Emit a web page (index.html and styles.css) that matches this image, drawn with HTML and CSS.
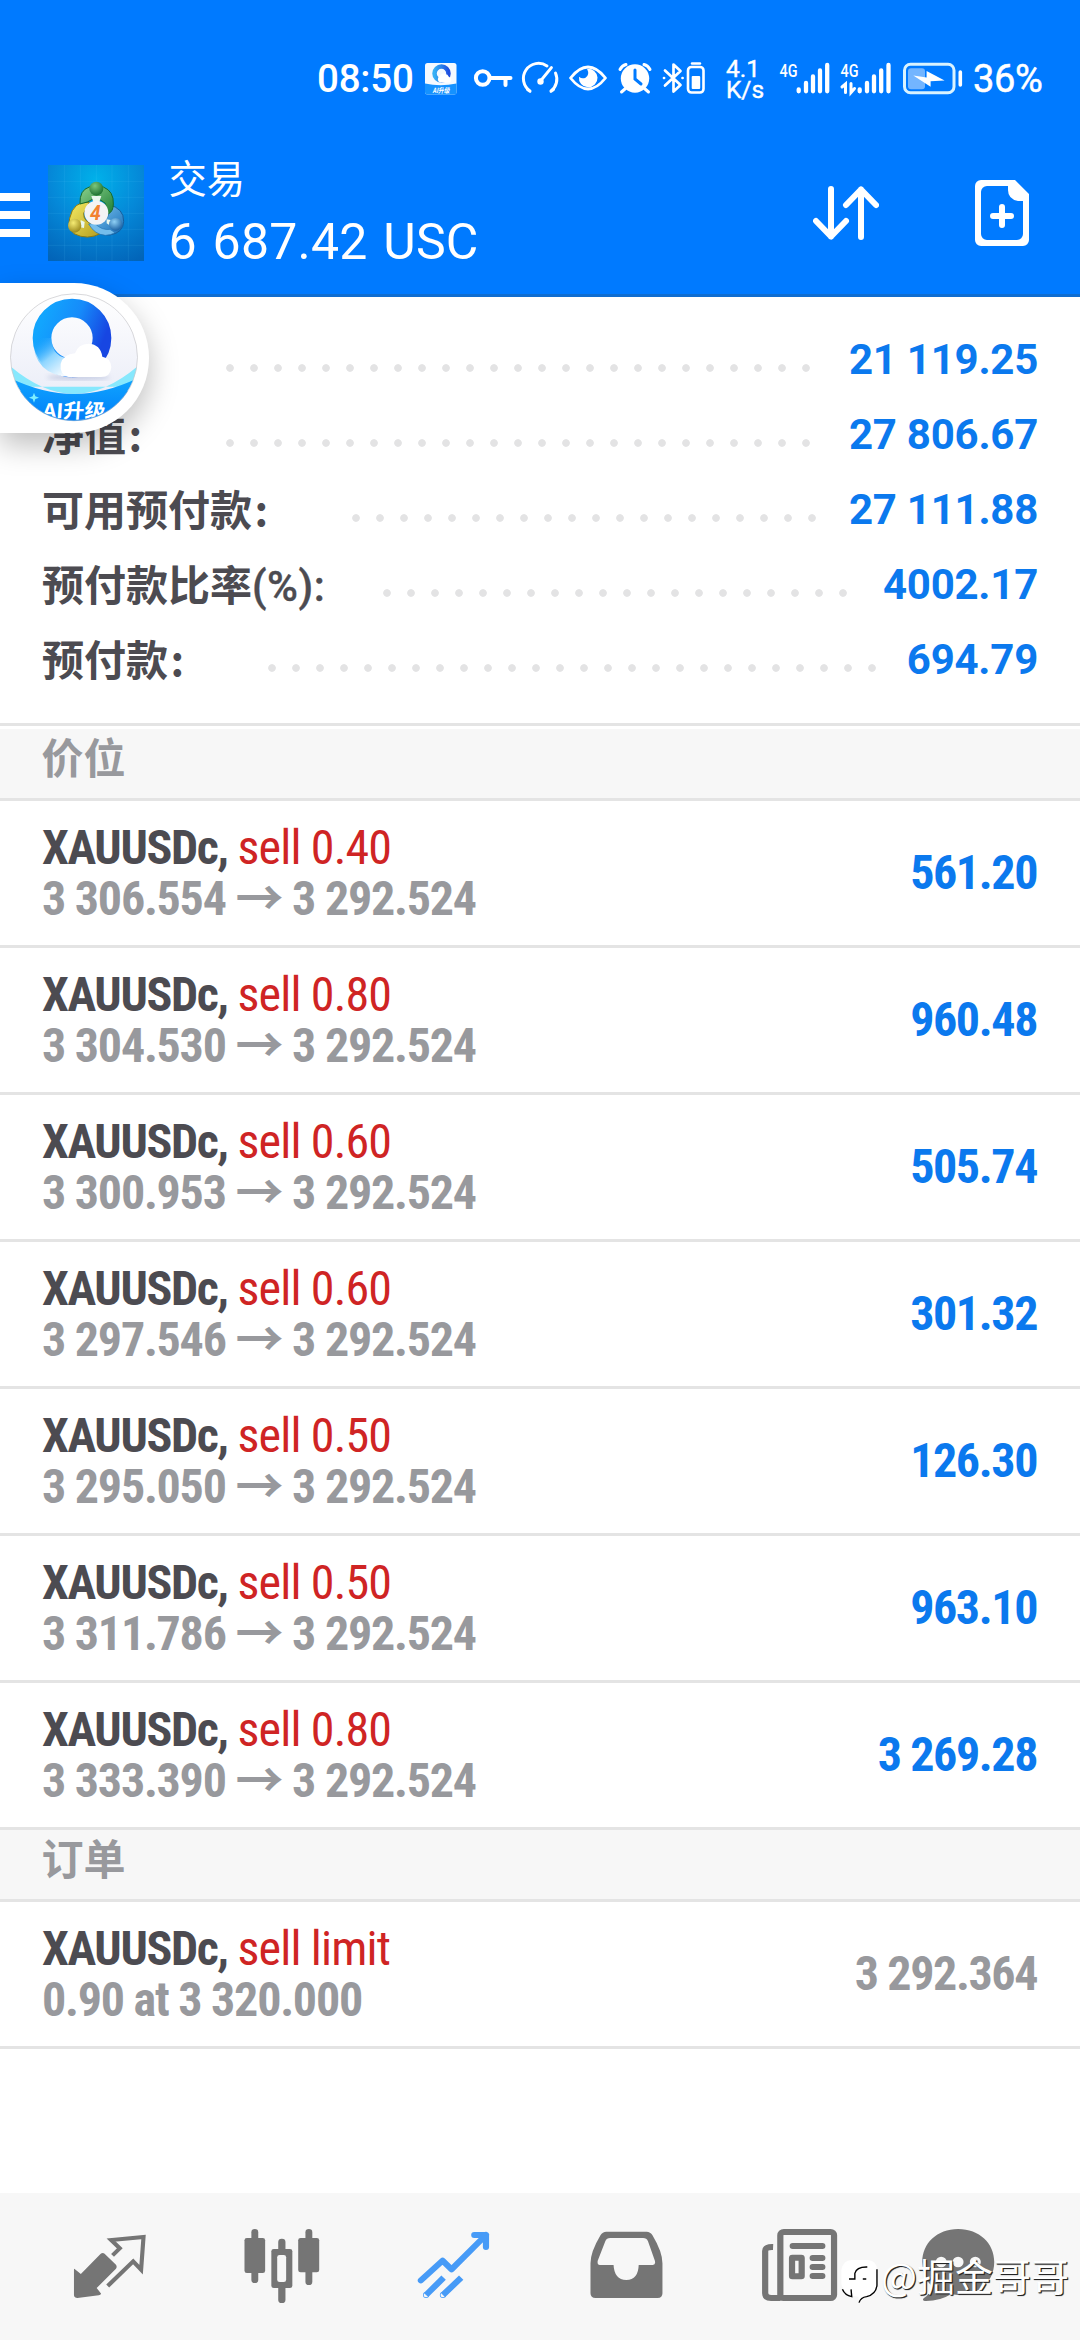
FILE: index.html
```html
<!DOCTYPE html>
<html lang="zh-CN">
<head>
<meta charset="utf-8">
<title>交易</title>
<link rel="stylesheet" href="styles.css">
</head>
<body>
<div class="app">
  <header class="top">
    <div class="status">
      <span class="clock">08:50</span>
      <svg class="status-icons" width="300" height="40" viewBox="420 58 300 40" fill="none" stroke="#fff" stroke-width="3.4" stroke-linecap="round">
        <defs>
          <linearGradient id="mini" x1="0" y1="0" x2="1" y2="0"><stop offset="0" stop-color="#35b0f5"/><stop offset="1" stop-color="#1f4fe0"/></linearGradient>
        </defs>
        <g stroke="none">
          <rect x="425" y="63" width="31.5" height="31.5" rx="2.5" fill="#f4f9ff"/>
          <path d="M425 83.500Q440.500 87 456.500 83.500V92q0 2.500-2.500 2.500H427.500q-2.500 0-2.500-2.500z" fill="#1592ff"/>
          <circle cx="441.500" cy="73.500" r="7" stroke="url(#mini)" stroke-width="4.500"/>
          <path d="M440 82.500a3.500 3.500 0 0 1 0-6.500 5 5 0 0 1 9 1 3 3 0 0 1 1 5.500z" fill="#fff"/>
          <text class="mini-label" x="432.500" y="93" textLength="17" lengthAdjust="spacingAndGlyphs">AI升级</text>
        </g>
        <g stroke-width="4"><circle cx="482.700" cy="78" r="6.800"/><path d="M491 78h19.500M505.500 79v6" /></g>
        <path d="M530 91a15 15 0 0 1 17-25M555.500 73a15 15 0 0 1-4.500 18M527.500 89.500l2.500 1.800M553.500 89.500l-2.500 1.800" stroke-width="3"/>
        <path d="M540.500 81l11-13.500" stroke-width="2.800"/><circle cx="540.500" cy="81.500" r="3.200" fill="#fff" stroke="none"/>
        <path d="M570.500 78q17.500-22 35 0q-17.500 22-35 0z" stroke-width="2.800" stroke-linejoin="round"/>
        <path d="M587 68.800a9.300 9.300 0 1 1-8 8q3 2.500 6.500 1 4.500-3 1.500-9z" fill="#fff" stroke="none"/>
        <circle cx="635" cy="78.500" r="14.200" fill="#fff" stroke="none"/>
        <path d="M620 69.500q2-4 6-5M650 69.500q-2-4-6-5M625.500 88.500l-4 3.500M644.500 88.500l4 3.500" stroke-width="3"/>
        <path d="M635 70v9l6 5" stroke="#007aff" stroke-width="3"/>
        <path d="M665 70.500l15.500 14.500-7 6.500v-27l7 6.500-15.500 14.500M664 78h.1M682.500 78h.1" stroke-width="2.700" stroke-linejoin="round"/>
        <rect x="688" y="67" width="15.500" height="25.500" rx="3.500" stroke-width="2.600"/>
        <path d="M692 63.500h8" stroke-width="2.400"/><rect x="691.700" y="76" width="8.500" height="13" rx="1" fill="#fff" stroke="none"/>
      </svg>
      <span class="speed">4.1<br>K/s</span>
      <svg class="signal" width="195" height="40" viewBox="775 58 195 40" fill="none" stroke="#fff" stroke-linecap="round">
        <text class="net" x="779.500" y="76.500" textLength="18" lengthAdjust="spacingAndGlyphs">4G</text>
        <text class="net" x="840.500" y="76.500" textLength="18" lengthAdjust="spacingAndGlyphs">4G</text>
        <path d="M798.700 89.500v1.800M806 83v8.300M813 76.500v14.800M820 70.500v20.800M827.200 65v26.300M859.700 89.500v1.800M867 83v8.300M874 76.500v14.800M881.200 70.500v20.800M888.500 65v26.300" stroke-width="4.300"/>
        <path d="M842 87l3.500-3v8.500M851 83.500v9l3.500-4" stroke-width="3"/>
        <rect x="904.500" y="64.200" width="49.500" height="28.600" rx="6" stroke="#d9f3ff" stroke-width="3"/>
        <rect x="908" y="68.300" width="17" height="21" rx="3" fill="#73b5ff" stroke="none"/>
        <path d="M913.300 75.500l13.300 2v-6.500l18 9.500-14 .7v5.500z" fill="#fff" stroke="none"/>
        <path d="M960.300 72v13" stroke-width="3.600"/>
      </svg>
      <span class="percent">36%</span>
    </div>
    <div class="bar">
      <div class="menu"><i></i><i></i><i></i></div>
      <svg class="logo" width="96" height="96" viewBox="144 75 288 288">
        <defs>
          <radialGradient id="bg" cx=".5" cy=".15" r=".95"><stop offset="0" stop-color="#00b1ea"/><stop offset=".5" stop-color="#0588d8"/><stop offset="1" stop-color="#0264b8"/></radialGradient>
          <linearGradient id="gr" x1="0" y1="0" x2="1" y2="1"><stop offset="0" stop-color="#8bd08c"/><stop offset="1" stop-color="#1d7f35"/></linearGradient>
          <radialGradient id="grh" cx=".4" cy=".3" r=".8"><stop offset="0" stop-color="#7cc67c"/><stop offset="1" stop-color="#0f6526"/></radialGradient>
          <linearGradient id="ye" x1="0" y1="0" x2="1" y2="1"><stop offset="0" stop-color="#f5ec65"/><stop offset="1" stop-color="#b59c1c"/></linearGradient>
          <radialGradient id="yeh" cx=".4" cy=".3" r=".8"><stop offset="0" stop-color="#f6ec74"/><stop offset="1" stop-color="#8f7c10"/></radialGradient>
          <linearGradient id="bl" x1="0" y1="0" x2="1" y2="1"><stop offset="0" stop-color="#86cdf5"/><stop offset="1" stop-color="#146bb6"/></linearGradient>
          <radialGradient id="blh" cx=".4" cy=".3" r=".8"><stop offset="0" stop-color="#8fd0f5"/><stop offset="1" stop-color="#0e5499"/></radialGradient>
        </defs>
        <rect x="144" y="75" width="288" height="288" fill="url(#bg)"/>
        <path d="M194 75v288M242 75v288M289 75v288M336 75v288M385 75v288M144 125h288M144 172h288M144 220h288M144 268h288M144 316h288" stroke="#6cd0ff" stroke-opacity=".22" stroke-width="1.500"/>
        <path d="M326 194Q372 205 371 244Q370 278 330 285Q292 288 266 252L300 244Q332 244 326 194z" fill="url(#bl)" stroke="#145e9e" stroke-width="3"/>
        <path d="M268 187Q220 182 209 235Q202 262 222 281Q262 302 303 280L280 252Q250 246 251 220z" fill="url(#ye)" stroke="#8c7a12" stroke-width="3"/>
        <path d="M240 192Q238 150 268 141H310Q342 154 340 192Q340 214 325 222L316 190Q290 166 262 186z" fill="url(#gr)" stroke="#176a2c" stroke-width="3"/>
        <path d="M266 252L284 250Q306 272 330 268L345 278Q334 285 316 286Q284 284 266 252z" fill="#74bdec" stroke="#2272b4" stroke-width="2"/>
        <path d="M274 168h30l-6 18h-18zM242 240l12 6-2 18-10-2zM320 238l12 2 0 18-12-8z" fill="#e9f7ed"/>
        <circle cx="289" cy="146" r="21" fill="url(#grh)"/><ellipse cx="224" cy="257" rx="20" ry="21" fill="url(#yeh)"/><ellipse cx="347" cy="253" rx="20" ry="19" fill="url(#blh)"/>
        <circle cx="289" cy="218" r="36" fill="#f3f3f5"/>
        <text class="four" x="270" y="240">4</text>
      </svg>
      <div class="account"><div class="title">交易</div><div class="amount">6 687.42 USC</div></div>
      <svg class="sort" width="66" height="54" viewBox="813 186 66 54" fill="none" stroke="#fff" stroke-width="6" stroke-linecap="round" stroke-linejoin="round"><path d="M831 189v47.500M816 221l15 15.500 15-15.500M861 237v-47.500M846 205l15-15.500 15 15.500"/></svg>
      <svg class="new" width="54" height="66" viewBox="975 180 54 66"><path fill="#fff" fill-rule="evenodd" d="M981 180h34l14 14v46a6 6 0 0 1-6 6h-42a6 6 0 0 1-6-6v-54a6 6 0 0 1 6-6zM987 186a6 6 0 0 0-6 6v42a6 6 0 0 0 6 6h30a6 6 0 0 0 6-6v-33h-5q-10-2-10-11v-4z"/><path d="M993 216h18M1002 207v18" stroke="#fff" stroke-width="6" stroke-linecap="round"/></svg>
    </div>
  </header>

  <section class="summary">
    <div class="sum"><span class="label"></span><i class="dots" style="width:600px"></i><b style="width:220px">21 119.25</b></div>
    <div class="sum"><span class="label">净值<span class="colon">:</span></span><i class="dots" style="width:600px"></i><b style="width:220px">27 806.67</b></div>
    <div class="sum"><span class="label">可用预付款<span class="colon">:</span></span><i class="dots" style="width:480px"></i><b style="width:214px">27 111.88</b></div>
    <div class="sum"><span class="label">预付款比率<span class="latin">(%):</span></span><i class="dots" style="width:480px"></i><b style="width:183px">4002.17</b></div>
    <div class="sum"><span class="label">预付款<span class="colon">:</span></span><i class="dots" style="width:624px"></i><b style="width:154px">694.79</b></div>
  </section>

  <h2 class="section first">价位</h2>
  <div class="row"><div><p><b>XAUUSDc,</b> <em>sell 0.40</em></p><p class="sub">3 306.554 <span class="arrow">→</span> 3 292.524</p></div><span class="profit">561.20</span></div>
  <div class="row"><div><p><b>XAUUSDc,</b> <em>sell 0.80</em></p><p class="sub">3 304.530 <span class="arrow">→</span> 3 292.524</p></div><span class="profit">960.48</span></div>
  <div class="row"><div><p><b>XAUUSDc,</b> <em>sell 0.60</em></p><p class="sub">3 300.953 <span class="arrow">→</span> 3 292.524</p></div><span class="profit">505.74</span></div>
  <div class="row"><div><p><b>XAUUSDc,</b> <em>sell 0.60</em></p><p class="sub">3 297.546 <span class="arrow">→</span> 3 292.524</p></div><span class="profit">301.32</span></div>
  <div class="row"><div><p><b>XAUUSDc,</b> <em>sell 0.50</em></p><p class="sub">3 295.050 <span class="arrow">→</span> 3 292.524</p></div><span class="profit">126.30</span></div>
  <div class="row"><div><p><b>XAUUSDc,</b> <em>sell 0.50</em></p><p class="sub">3 311.786 <span class="arrow">→</span> 3 292.524</p></div><span class="profit">963.10</span></div>
  <div class="row"><div><p><b>XAUUSDc,</b> <em>sell 0.80</em></p><p class="sub">3 333.390 <span class="arrow">→</span> 3 292.524</p></div><span class="profit">3 269.28</span></div>
  <h2 class="section">订单</h2>
  <div class="row"><div><p><b>XAUUSDc,</b> <em>sell limit</em></p><p class="sub">0.90 at 3 320.000</p></div><span class="profit pending">3 292.364</span></div>

  <nav class="tabs">
    <svg viewBox="68 39 506 441" preserveAspectRatio="none" fill="#757575">
      <path d="M217 266L236 282L293 222Q299 216 305 221L338 254Q342 260 338 266L282 324L295 341Q293 345 288 346L226 354Q217 354 216 346V268z"/>
      <path d="M328 226L349 205L324 180L418 171L411 269L388 244L314 318" fill="none" stroke="#757575" stroke-width="12"/>
    </svg>
    <svg viewBox="574 39 506 441" preserveAspectRatio="none" fill="#757575">
      <rect x="729" y="147" width="20" height="162" rx="10"/><rect x="709" y="174" width="60" height="105" rx="7"/>
      <rect x="886" y="147" width="20" height="168" rx="10"/><rect x="865" y="174" width="61" height="103" rx="7"/>
      <rect x="807" y="176" width="21" height="193" rx="10"/><rect x="787" y="207" width="61" height="117" rx="7"/><rect x="804" y="225" width="26" height="81" rx="7" fill="#f7f7f7"/>
    </svg>
    <svg viewBox="1080 39 506 441" preserveAspectRatio="none" fill="none" stroke="#479bf7" stroke-width="18">
      <path d="M1222 301L1285 242L1311 268L1411 165M1377 165H1411V201" stroke-linecap="round" stroke-linejoin="round"/>
      <path d="M1288 293L1237 345M1339 293L1286 345"/><circle cx="1237" cy="345" r="1" stroke-width="16"/><circle cx="1286" cy="345" r="1" stroke-width="16"/>
    </svg>
    <svg viewBox="17.8 39 506 441" preserveAspectRatio="none">
      <path fill="#757575" fill-rule="evenodd" d="M193 155H310Q321 155 327 166Q356 216 356 250V340Q356 354 342 354H162Q147 354 147 340V250Q147 216 176 166Q182 155 193 155zM204 174Q194 174 190 184L168 242Q166 255 174 255H214Q216 299 251 300Q286 299 287 255H328Q337 255 334 242L314 184Q310 174 300 174z"/>
    </svg>
    <svg viewBox="523.8 39 506 441" preserveAspectRatio="none" fill="none" stroke="#757575" stroke-width="18">
      <rect x="699" y="156" width="156" height="198" rx="10"/><path d="M678 201Q655 200 655 213V340Q655 354 672 354H700"/>
      <path d="M735 198H821M793 234H821M793 261H821M793 288H821" stroke-linecap="round"/><rect x="733" y="233" width="28" height="56" rx="1"/>
    </svg>
    <svg viewBox="1029.800 39 506 441" preserveAspectRatio="none">
      <path fill="#757575" d="M1213 147C1275 147 1318 190 1318 246C1318 304 1275 345 1213 345L1192 343Q1160 364 1116 363Q1108 361 1113 355Q1134 342 1134 316Q1110 290 1109 246C1109 190 1152 147 1213 147z"/>
      <g fill="#f7f7f7"><circle cx="1164" cy="246" r="16"/><circle cx="1213" cy="246" r="16"/><circle cx="1263" cy="246" r="16"/></g>
    </svg>
  </nav>

  <div class="bubble">
    <svg width="149" height="150" viewBox="0 39 447 450">
      <defs>
        <clipPath id="disc"><circle cx="222" cy="262" r="190"/></clipPath>
        <linearGradient id="sky" x1="0" y1="0" x2="0" y2="1"><stop offset="0" stop-color="#fff"/><stop offset=".75" stop-color="#eceef8"/></linearGradient>
        <linearGradient id="band" x1="0" y1="0" x2="0" y2="1"><stop offset="0" stop-color="#10a5ff"/><stop offset="1" stop-color="#007cf8"/></linearGradient>
        <linearGradient id="ring" x1="0" y1=".2" x2="1" y2=".6"><stop offset="0" stop-color="#12a5fe"/><stop offset=".5" stop-color="#168bfa"/><stop offset="1" stop-color="#1746e2"/></linearGradient>
        <linearGradient id="fade" gradientUnits="userSpaceOnUse" x1="120" y1="204" x2="200" y2="305"><stop offset="0" stop-color="#23abfe" stop-opacity="0"/><stop offset=".5" stop-color="#8fd6ff"/><stop offset="1" stop-color="#f4faff"/></linearGradient>
        <filter id="soft"><feGaussianBlur stdDeviation="6"/></filter>
      </defs>
      <g clip-path="url(#disc)">
        <rect x="30" y="70" width="390" height="390" fill="url(#sky)"/>
        <ellipse cx="235" cy="322" rx="95" ry="9" fill="#c0c7e0" opacity=".8" filter="url(#soft)"/>
        <circle cx="216" cy="204" r="90" fill="none" stroke="url(#ring)" stroke-width="56"/>
        <path d="M98 204H154Q156 266 216 266V322Q100 318 98 204z" fill="url(#fade)"/>
        <path d="M207 321Q178 314 182 282Q190 252 225 250Q234 222 266 221Q302 223 307 260Q333 265 334 291Q332 321 303 321z" fill="#fff"/>
        <path d="M30 288Q130 372 222 372Q314 372 414 288V350H30z" fill="#87e8fd"/>
        <path d="M30 324Q130 372 222 372Q314 372 414 324V460H30z" fill="url(#band)"/>
        <path d="M102 368l4 11 11 4-11 4-4 11-4-11-11-4 11-4z" fill="#7defff"/>
        <text class="upgrade" x="0" y="0" transform="translate(127 444) skewX(-4)" textLength="188" lengthAdjust="spacingAndGlyphs">AI升级</text>
      </g>
      <circle cx="222" cy="262" r="190.500" fill="none" stroke="#c4c4c8" stroke-width="2"/>
      <path d="M62 364A190 190 0 0 0 382 364" fill="none" stroke="#2a93ee" stroke-width="2"/>
    </svg>
  </div>

  <div class="watermark">
    <svg width="38" height="46" viewBox="866 236 110 138" preserveAspectRatio="none"><path d="M900 242H945Q973 244 973 272V318Q970 344 945 352Q930 354 920 368V352Q880 350 870 315V272Q874 244 900 242z" fill="#fff"/><path d="M973 270V318Q970 345 943 352Q926 354 921 370M873 330Q880 348 900 352L898 330M892 299H909V282Q914 262 945 263M932 299H942" fill="none" stroke="#000" stroke-width="4"/></svg>
    <span>@掘金哥哥</span>
  </div>
</div>
</body>
</html>
```
FILE: styles.css
```css
* { box-sizing: border-box; }
body, p, h2 { margin: 0; }
body { background: #fff; font-family: Roboto, "Noto Sans CJK SC", sans-serif; }
svg { display: block; flex: none; }
.app { position: relative; width: 1080px; height: 2340px; overflow: hidden; display: flex; flex-direction: column; background: #fff; }

.top { height: 297px; flex: none; background: #007aff; border-bottom: 3px solid #0f6dd0; color: #fff; padding-top: 58px; }
.status { height: 40px; display: flex; align-items: center; padding-left: 317px; white-space: nowrap; }
.clock { width: 103px; font-size: 38.500px; font-weight: 500; line-height: 40px; letter-spacing: -.2px; padding-top: 2px; }
.mini-label { font: italic 700 7px "Noto Sans CJK SC", sans-serif; fill: #fff; }
.speed { width: 55px; padding-left: 6px; font-size: 24.500px; line-height: 21px; padding-top: 1px; -webkit-text-stroke: .4px #fff; }
.net { font: 500 19px Roboto, sans-serif; fill: #fff; stroke: none; }
.percent { margin-left: 3px; font-size: 38px; line-height: 40px; padding-top: 2px; letter-spacing: -.4px; -webkit-text-stroke: .5px #fff; }

.bar { height: 178px; display: flex; align-items: center; margin-top: 33px; padding: 0 51px 20px 0; }
.menu { width: 48px; display: flex; flex-direction: column; gap: 10px; padding-top: 10px; }
.menu i { width: 30px; height: 8px; background: #fff; }
.logo { margin-top: 6px; }
.four { font: italic 700 58px Roboto, sans-serif; fill: #f28230; }
.account { margin-left: 24.500px; padding-top: 5px; }
.title { font: 400 38.300px/46px "Noto Sans CJK SC", sans-serif; }
.amount { font-size: 50px; line-height: 58px; margin-top: 13px; letter-spacing: .2px; word-spacing: 3.200px; white-space: nowrap; }
.sort { margin-left: auto; margin-top: 6px; }
.new { margin-left: 96px; margin-top: 6px; }

.summary { height: 426px; flex: none; padding: 25px 42px 0; }
.sum { height: 75px; display: flex; align-items: center; }
.label { font: 700 42px/75px "Noto Sans CJK SC", sans-serif; color: #4c4b51; white-space: nowrap; margin-top: -5px; }
.label .latin { font: 500 42px/1px Roboto, sans-serif; letter-spacing: .5px; -webkit-text-stroke: .4px #4c4b51; }
.colon { margin-left: 2.500px; }
.dots { height: 8px; margin: 17px 0 0 auto; flex: none; background: radial-gradient(circle, #e3e3e4 3.400px, transparent 4.200px) 0 0 / 24px 8px; }
.sum b { flex: none; font-size: 42px; font-weight: 700; letter-spacing: -.25px; line-height: 75px; text-align: right; color: #0b79ee; }

.section { height: 72px; flex: none; padding-left: 41.500px; background: #f7f7f7; border-bottom: 3px solid #e4e4e4; color: #98999d; font: 700 42px/54px "Noto Sans CJK SC", sans-serif; }
.section.first { height: 78px; border-top: 3px solid #e4e4e4; box-shadow: inset 0 3px #fff; line-height: 60px; }

.row { height: 147px; flex: none; display: flex; justify-content: space-between; align-items: center; padding: 0 43px 0 42px; border-bottom: 3px solid #e4e4e4; font-family: "Roboto Condensed", Roboto, sans-serif; font-size: 48px; line-height: 51px; letter-spacing: -1.240px; white-space: nowrap; }
.row p { height: 51px; }
.row b { color: #4c4b51; font-weight: 700; letter-spacing: -1.380px; }
.row em { font-style: normal; color: #cf2424; letter-spacing: -.830px; }
.row .sub { color: #98999d; font-weight: 700; }
.arrow { font: 700 48px/1px "Noto Sans CJK SC", sans-serif; }
.profit { font-weight: 700; color: #0b79ee; margin-top: -2px; letter-spacing: -1.400px; }
.profit.pending { color: #98999d; }

.tabs { height: 147px; flex: none; margin-top: auto; padding-left: 23.400px; display: flex; background: #f7f7f7; }
.tabs svg { width: 174.240px; height: 147px; }

.bubble { position: absolute; left: 0; top: 283px; width: 149px; height: 150px; border-radius: 0 75px 75px 0; background: #fff; box-shadow: 0 12px 30px rgba(0,0,0,.26); }
.upgrade { font: 700 60px "Noto Sans CJK SC", sans-serif; fill: #fff; }
.watermark { position: absolute; left: 840px; top: 2258px; display: flex; color: #fff; }
.watermark span { margin: -4px 0 0 3px; font: 400 38px/42px "Noto Sans CJK SC", sans-serif; text-shadow: 1px 1px 1px #222, 1px 1px 0 #444; white-space: nowrap; }
```
